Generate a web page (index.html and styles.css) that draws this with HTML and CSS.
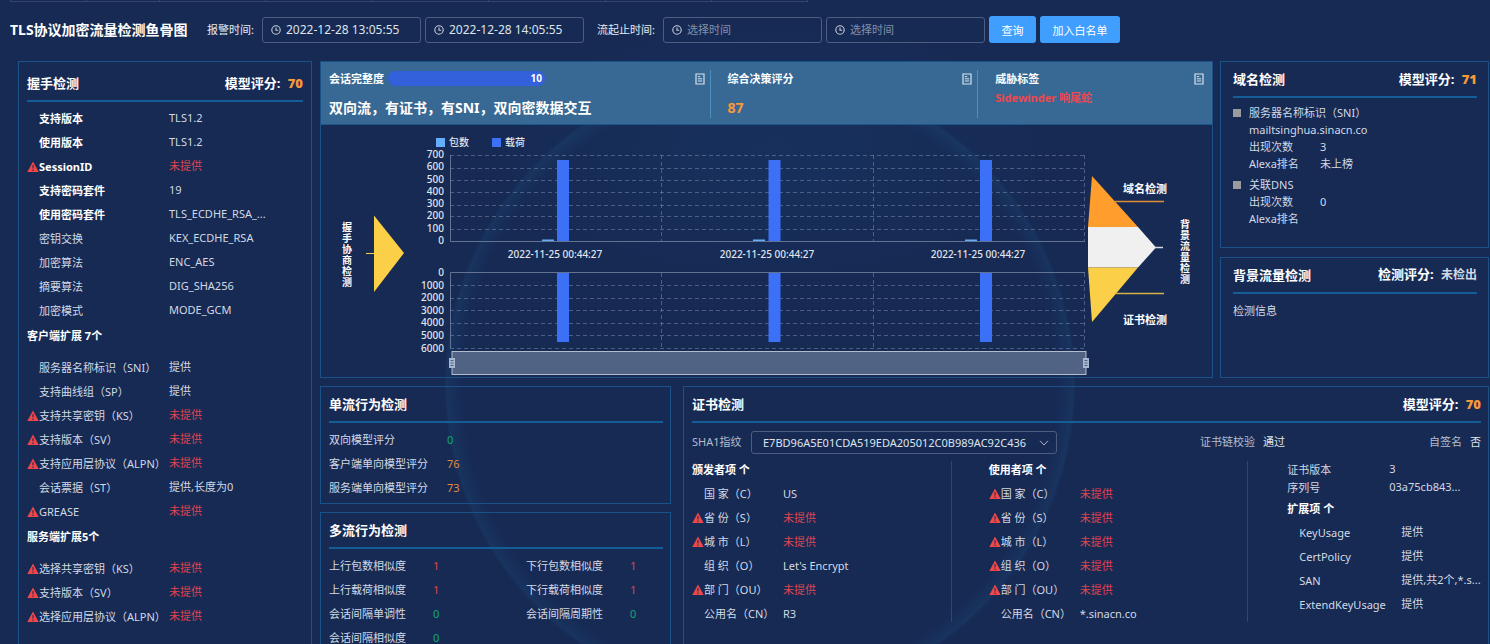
FILE: index.html
```html
<!DOCTYPE html>
<html lang="zh-CN">
<head>
<meta charset="utf-8">
<title>TLS协议加密流量检测鱼骨图</title>
<link rel="stylesheet" href="styles.css">
</head>
<body>
<svg class="defs" aria-hidden="true">
  <symbol id="warn" viewBox="0 0 12 12"><path d="M6 .6 11.7 11H.3z" fill="#f04848"/><path d="M5.3 4h1.4v3.6H5.3zM5.3 8.5h1.4v1.4H5.3z" fill="#5a2c50"/></symbol>
  <symbol id="clock" viewBox="0 0 12 12"><circle cx="6" cy="6" r="4.2" fill="none" stroke="#c9cfdb" stroke-width="1.1"/><path d="M6 3.4V6.3H8.2" fill="none" stroke="#c9cfdb" stroke-width="1.1"/></symbol>
  <symbol id="doc" viewBox="0 0 10 12"><path d="M1 1h8v10H1z" fill="none" stroke="#d5e2ee" stroke-width="1.2"/><path d="M2.8 3.6h2.4M2.8 5.8h4.4M2.8 8h4.4" stroke="#d5e2ee" stroke-width="1"/></symbol>
</svg>
<div class="app">
  <div class="tabs"><i></i><i></i><i></i><i></i><i></i><i></i><i></i><i></i></div>

  <header class="toolbar">
    <h1 class="title">TLS协议加密流量检测鱼骨图</h1>
    <label class="toolbar-label" for="alarm-from">报警时间:</label>
    <span class="time"><svg><use href="#clock"/></svg><input id="alarm-from" type="text" value="2022-12-28 13:05:55"></span>
    <span class="time"><svg><use href="#clock"/></svg><input type="text" aria-label="报警结束时间" value="2022-12-28 14:05:55"></span>
    <label class="toolbar-label flow-label" for="flow-from">流起止时间:</label>
    <span class="time"><svg><use href="#clock"/></svg><input id="flow-from" type="text" placeholder="选择时间"></span>
    <span class="time"><svg><use href="#clock"/></svg><input type="text" aria-label="流终止时间" placeholder="选择时间"></span>
    <button class="btn" type="button">查询</button>
    <button class="btn btn-wide" type="button">加入白名单</button>
  </header>

  <main class="board">
    <section class="panel handshake">
      <div class="panel-head"><h2>握手检测</h2><p>模型评分: <b>70</b></p></div>
      <dl class="rows">
        <div class="strong"><dt>支持版本</dt><dd>TLS1.2</dd></div>
        <div class="strong"><dt>使用版本</dt><dd>TLS1.2</dd></div>
        <div class="strong"><svg><use href="#warn"/></svg><dt>SessionID</dt><dd class="bad">未提供</dd></div>
        <div class="strong"><dt>支持密码套件</dt><dd>19</dd></div>
        <div class="strong"><dt>使用密码套件</dt><dd>TLS_ECDHE_RSA_...</dd></div>
        <div><dt>密钥交换</dt><dd>KEX_ECDHE_RSA</dd></div>
        <div><dt>加密算法</dt><dd>ENC_AES</dd></div>
        <div><dt>摘要算法</dt><dd>DIG_SHA256</dd></div>
        <div><dt>加密模式</dt><dd>MODE_GCM</dd></div>
      </dl>
      <h3>客户端扩展 7个</h3>
      <dl class="rows">
        <div><dt>服务器名称标识（SNI）</dt><dd>提供</dd></div>
        <div><dt>支持曲线组（SP）</dt><dd>提供</dd></div>
        <div><svg><use href="#warn"/></svg><dt>支持共享密钥（KS）</dt><dd class="bad">未提供</dd></div>
        <div><svg><use href="#warn"/></svg><dt>支持版本（SV）</dt><dd class="bad">未提供</dd></div>
        <div><svg><use href="#warn"/></svg><dt>支持应用层协议（ALPN）</dt><dd class="bad">未提供</dd></div>
        <div><dt>会话票据（ST）</dt><dd>提供,长度为0</dd></div>
        <div><svg><use href="#warn"/></svg><dt>GREASE</dt><dd class="bad">未提供</dd></div>
      </dl>
      <h3>服务端扩展5个</h3>
      <dl class="rows">
        <div><svg><use href="#warn"/></svg><dt>选择共享密钥（KS）</dt><dd class="bad">未提供</dd></div>
        <div><svg><use href="#warn"/></svg><dt>支持版本（SV）</dt><dd class="bad">未提供</dd></div>
        <div><svg><use href="#warn"/></svg><dt>选择应用层协议（ALPN）</dt><dd class="bad">未提供</dd></div>
      </dl>
    </section>

    <div class="right">
      <div class="upper">
        <section class="panel overview">
          <div class="band">
            <div class="cell">
              <div class="cell-top"><span>会话完整度</span><span class="bar">10</span><svg class="doc"><use href="#doc"/></svg></div>
              <p class="summary">双向流，有证书，有SNI，双向密数据交互</p>
            </div>
            <div class="cell">
              <div class="cell-top"><span>综合决策评分</span><svg class="doc"><use href="#doc"/></svg></div>
              <p class="summary score">87</p>
            </div>
            <div class="cell">
              <div class="cell-top"><span>威胁标签</span><svg class="doc"><use href="#doc"/></svg></div>
              <p class="threat">Sidewinder 响尾蛇</p>
            </div>
          </div>
          <svg class="chart" viewBox="321 125 891 252" role="img" aria-label="包数与载荷">
            <rect x="436" y="138" width="9" height="9" fill="#63aefb"/><text x="449" y="146">包数</text>
            <rect x="492" y="138" width="9" height="9" fill="#3c70f6"/><text x="505" y="146">载荷</text>
            <g class="grid">
              <path d="M450 155.500H1085M450 168.500H1085M450 180.500H1085M450 192.500H1085M450 205.500H1085M450 216.500H1085M450 229.500H1085M450 285.500H1085M450 298.500H1085M450 310.500H1085M450 323.500H1085M450 335.500H1085M450 348.500H1085"/>
              <path d="M661.500 155V241M873.500 155V241M1084.500 155V241M661.500 273V348M873.500 273V348M1084.500 273V348"/>
            </g>
            <path class="axis" d="M450.500 155V241.500H1085M450.500 348V272.500H1085"/>
            <g class="ticks">
              <text x="444" y="158">700</text><text x="444" y="170">600</text><text x="444" y="183">500</text><text x="444" y="195">400</text><text x="444" y="207">300</text><text x="444" y="219">200</text><text x="444" y="232">100</text><text x="444" y="244">0</text>
              <text x="444" y="276">0</text><text x="444" y="289">1000</text><text x="444" y="301">2000</text><text x="444" y="314">3000</text><text x="444" y="326">4000</text><text x="444" y="339">5000</text><text x="444" y="352">6000</text>
            </g>
            <g fill="#3c70f6">
              <path d="M557 160h12v81h-12zM768.500 160h12v81h-12zM980 160h12v81h-12zM557 273h12v69h-12zM768.500 273h12v69h-12zM980 273h12v69h-12z"/>
              <path d="M542 239.500h12v1.500h-12zM753 239.500h12v1.500h-12zM965 239.500h12v1.500h-12z" fill="#63aefb"/>
            </g>
            <g class="dates"><text x="555" y="258">2022-11-25 00:44:27</text><text x="767" y="258">2022-11-25 00:44:27</text><text x="978" y="258">2022-11-25 00:44:27</text></g>
            <rect x="452" y="351.500" width="634" height="23" fill="#506384" stroke="#b4bccb"/>
            <g fill="#a7b7cf"><rect x="449" y="358" width="6" height="10"/><rect x="1083" y="358" width="6" height="10"/></g>
            <path d="M450.500 360.500h3M450.500 363h3M450.500 365.500h3M1084.500 360.500h3M1084.500 363h3M1084.500 365.500h3" stroke="#506384"/>
            <path d="M374 215.500 404 253 374 292z" fill="#fccf48"/><path d="M366 253.500h9" stroke="#fccf48"/>
            <path d="M1092 176 1138 227h-50z" fill="#ff9e2c"/><path d="M1088 227h50l18 20.500-18 20h-50z" fill="#f0f0f0"/><path d="M1088 267.500h50L1092 322z" fill="#fccf48"/>
            <path d="M1115 201.500h49" stroke="#e08e34" stroke-width="1.500"/><path d="M1155 247.500h8" stroke="#d4d8e2" stroke-width="1.500"/><path d="M1115 293.500h49" stroke="#d2b344" stroke-width="1.500"/>
            <g class="bone"><text x="1145" y="193">域名检测</text><text x="1145" y="324">证书检测</text></g>
            <g class="bone spine"><text x="347" y="231">握</text><text x="347" y="242">手</text><text x="347" y="253">协</text><text x="347" y="264">商</text><text x="347" y="275">检</text><text x="347" y="286">测</text>
              <text x="1185" y="228">背</text><text x="1185" y="239">景</text><text x="1185" y="250">流</text><text x="1185" y="261">量</text><text x="1185" y="272">检</text><text x="1185" y="283">测</text></g>
          </svg>
        </section>

        <div class="side">
          <section class="panel domain">
            <div class="panel-head"><h2>域名检测</h2><p>模型评分: <b>71</b></p></div>
            <ul class="domains">
              <li><p>服务器名称标识（SNI）</p><p>mailtsinghua.sinacn.co</p><p><span>出现次数</span>3</p><p><span>Alexa排名</span>未上榜</p></li>
              <li><p>关联DNS</p><p><span>出现次数</span>0</p><p><span>Alexa排名</span></p></li>
            </ul>
          </section>
          <section class="panel background">
            <div class="panel-head"><h2>背景流量检测</h2><p>检测评分: <span class="none">未检出</span></p></div>
            <p class="info">检测信息</p>
          </section>
        </div>
      </div>

      <div class="lower">
        <div class="flows">
          <section class="panel flow">
            <div class="panel-head"><h2>单流行为检测</h2></div>
            <dl class="rows single">
              <div><dt>双向模型评分</dt><dd class="good">0</dd></div>
              <div><dt>客户端单向模型评分</dt><dd class="mid">76</dd></div>
              <div><dt>服务端单向模型评分</dt><dd class="mid">73</dd></div>
            </dl>
          </section>
          <section class="panel flow multi-flow">
            <div class="panel-head"><h2>多流行为检测</h2></div>
            <dl class="rows multi">
              <div><dt>上行包数相似度</dt><dd class="bad">1</dd></div>
              <div><dt>下行包数相似度</dt><dd class="bad">1</dd></div>
              <div><dt>上行载荷相似度</dt><dd class="bad">1</dd></div>
              <div><dt>下行载荷相似度</dt><dd class="bad">1</dd></div>
              <div><dt>会话间隔单调性</dt><dd class="good">0</dd></div>
              <div><dt>会话间隔周期性</dt><dd class="good">0</dd></div>
              <div><dt>会话间隔相似度</dt><dd class="good">0</dd></div>
            </dl>
          </section>
        </div>

        <section class="panel flow cert">
          <div class="panel-head"><h2>证书检测</h2><p>模型评分: <b>70</b></p></div>
          <div class="cert-bar">
            <label for="sha1">SHA1指纹</label>
            <span class="picker"><select id="sha1"><option>E7BD96A5E01CDA519EDA205012C0B989AC92C436</option></select><svg viewBox="0 0 10 6"><path d="M1 .8 5 5 9 .8" fill="none" stroke="#a9b3c6"/></svg></span>
            <p class="chain">证书链校验<em>通过</em></p>
            <p class="self">自签名<em>否</em></p>
          </div>
          <div class="cert-cols">
            <div class="cert-col">
              <h3>颁发者项 个</h3>
              <dl class="rows">
                <div><dt>国 家（C）</dt><dd>US</dd></div>
                <div><svg><use href="#warn"/></svg><dt>省 份（S）</dt><dd class="bad">未提供</dd></div>
                <div><svg><use href="#warn"/></svg><dt>城 市（L）</dt><dd class="bad">未提供</dd></div>
                <div><dt>组 织（O）</dt><dd>Let's Encrypt</dd></div>
                <div><svg><use href="#warn"/></svg><dt>部 门（OU）</dt><dd class="bad">未提供</dd></div>
                <div><dt>公用名（CN）</dt><dd>R3</dd></div>
              </dl>
            </div>
            <div class="cert-col">
              <h3>使用者项 个</h3>
              <dl class="rows">
                <div><svg><use href="#warn"/></svg><dt>国 家（C）</dt><dd class="bad">未提供</dd></div>
                <div><svg><use href="#warn"/></svg><dt>省 份（S）</dt><dd class="bad">未提供</dd></div>
                <div><svg><use href="#warn"/></svg><dt>城 市（L）</dt><dd class="bad">未提供</dd></div>
                <div><svg><use href="#warn"/></svg><dt>组 织（O）</dt><dd class="bad">未提供</dd></div>
                <div><svg><use href="#warn"/></svg><dt>部 门（OU）</dt><dd class="bad">未提供</dd></div>
                <div><dt>公用名（CN）</dt><dd>*.sinacn.co</dd></div>
              </dl>
            </div>
            <div class="cert-col extra">
              <dl class="rows meta">
                <div><dt>证书版本</dt><dd>3</dd></div>
                <div><dt>序列号</dt><dd>03a75cb843...</dd></div>
              </dl>
              <h3>扩展项 个</h3>
              <dl class="rows ext">
                <div><dt>KeyUsage</dt><dd>提供</dd></div>
                <div><dt>CertPolicy</dt><dd>提供</dd></div>
                <div><dt>SAN</dt><dd>提供,共2个,*.s...</dd></div>
                <div><dt>ExtendKeyUsage</dt><dd>提供</dd></div>
              </dl>
            </div>
          </div>
        </section>
      </div>
    </div>
  </main>
</div>
</body>
</html>
```
FILE: styles.css
```css
* { box-sizing: border-box; margin: 0; padding: 0; }
body, input, select, button {
  font-family: "Noto Sans", "Noto Sans CJK SC", sans-serif;
  font-size: 11px;
}
body { color: #d3d9e4; background: #162a54; line-height: 16px; }
.defs { display: none; }
ul { list-style: none; }

.app {
  height: 100vh;
  overflow: hidden;
  background:
    radial-gradient(circle 316px at 51% 385px, transparent 94%, rgba(40, 140, 190, .1) 99%, transparent 100%),
    radial-gradient(ellipse 280px 130px at 52% 150px, rgba(30, 100, 150, .12), transparent),
    #162a54;
}

.tabs { display: flex; height: 3px; margin-left: 10px; }
.tabs i { width: 106px; height: 2px; border: solid #34466f; border-width: 0 1px 1px 0; }
.tabs i:nth-child(1) { width: 77px; border-left-width: 1px; }
.tabs i:nth-child(2) { width: 73px; }
.tabs i:nth-child(5), .tabs i:nth-child(6) { width: 117px; }
.tabs i:nth-child(8) { width: 96px; }

.toolbar { display: flex; align-items: center; gap: 4px; padding: 13px 10px 18px; }
.title { width: 193px; font-size: 14px; line-height: 20px; color: #fff; white-space: nowrap; }
.toolbar-label { width: 51px; color: #e6eaf1; white-space: nowrap; }
.flow-label { width: 62px; margin-left: 9px; }
.time {
  display: flex; align-items: center; gap: 4px;
  width: 159px; height: 26px; padding: 0 7px;
  border: 1px solid #4c5d80; border-radius: 3px;
}
.time svg { flex: none; width: 12px; height: 12px; }
.time input { flex: 1; min-width: 0; border: 0; outline: 0; background: none; color: #dfe4ec; font-size: 12px; }
.time input::placeholder { color: #8290ab; font-size: 11px; opacity: 1; }
.btn { width: 47px; height: 27px; border: 0; border-radius: 3px; background: #409eff; color: #fff; }
.btn-wide { width: 80px; }

.board {
  display: grid; grid-template-columns: 294fr 1169fr; gap: 8px;
  padding: 0 1px 0 18px;
}
.panel { min-width: 0; border: 1px solid #1a5288; }
.panel-head {
  display: flex; justify-content: space-between; align-items: center;
  height: 36px; border-bottom: 2px solid #155d96; color: #fff;
}
.panel-head h2, .panel-head p { font-size: 13px; line-height: 20px; font-weight: 700; }
.panel-head b { margin-left: 4px; color: #f7983a; }
.none { margin-left: 4px; font-size: 12px; color: #d3d9e4; }

.handshake { padding: 4px 8px 60px; }
.handshake .panel-head { margin-bottom: 5px; }
h3 { font-size: 11px; line-height: 24px; color: #fff; }
.handshake h3 { margin: 1px 0 8px; }
.rows > div { display: grid; grid-template-columns: 12px 130px 1fr; align-items: center; height: 24px; white-space: nowrap; }
.rows svg { grid-column: 1; width: 12px; height: 12px; }
.rows dt { grid-column: 2; }
.rows dd { grid-column: 3; line-height: 16px; }
.handshake dd { padding-bottom: 3px; }
.strong dt { font-weight: 700; color: #fff; }
.rows .bad { color: #e04350; }
.good { color: #12a873; }
.mid { color: #e08a3c; }

.right { display: flex; flex-direction: column; gap: 8px; min-width: 0; }
.upper { display: grid; grid-template-columns: 893fr 269fr; gap: 7px; }
.band {
  display: grid; grid-template-columns: 390fr 268fr 234fr;
  height: 63px; padding: 8px 0;
  background: #386994; border-bottom: 1px solid #1f568a; color: #fff; font-weight: 700;
}
.cell { padding: 0 5px 0 17px; border-right: 1px solid #4a92c0; min-width: 0; }
.cell:first-child { padding-left: 8px; }
.cell:last-child { border: 0; padding-right: 8px; }
.cell-top { display: flex; align-items: center; gap: 4px; height: 17px; }
.bar { width: 157px; height: 15px; padding-right: 3px; border-radius: 8px; background: #3261db; font-size: 10px; line-height: 15px; text-align: right; }
.doc { width: 10px; height: 12px; margin-left: auto; }
.summary { margin-top: 11px; font-size: 14px; line-height: 20px; white-space: nowrap; }
.score { color: #f7983a; }
.threat { margin-top: 3px; color: #ee474c; }

.chart { display: block; width: 100%; font-size: 10px; font-weight: 500; fill: #e0e5ed; }
.grid { stroke: #8492ad; stroke-opacity: .5; stroke-dasharray: 4 3; fill: none; }
.axis { stroke: #7585a3; stroke-opacity: .8; fill: none; }
.ticks { text-anchor: end; }
.dates { text-anchor: middle; }
.bone { text-anchor: middle; font-size: 11px; font-weight: 700; fill: #fff; }
.spine { font-size: 10px; }

.side { display: flex; flex-direction: column; gap: 9px; min-width: 0; }
.side .panel { padding: 0 11px 0 12px; }
.domain { flex: 188; }
.background { flex: 121; }
.domains { padding-top: 6px; }
.domains li { position: relative; padding-left: 16px; margin-bottom: 4px; line-height: 17px; }
.domains li::before { content: ""; position: absolute; left: 0; top: 5px; width: 8px; height: 8px; background: #999b9f; }
.domains span { display: inline-block; width: 71px; }
.info { padding-top: 9px; }

.lower { display: grid; grid-template-columns: 351fr 806fr; gap: 12px; }
.flows { display: flex; flex-direction: column; gap: 8px; min-width: 0; }
.flow { padding: 0 7px 3px 8px; }
.rows.single, .rows.multi { padding-top: 5px; }
.single > div { grid-template-columns: 0 118px 1fr; }
.multi { display: grid; grid-template-columns: 197px 1fr; }
.multi > div { grid-template-columns: 0 104px 1fr; }
.multi-flow { flex: 1; }

.cert { padding-bottom: 40px; }
.cert-bar { display: flex; align-items: center; height: 38px; color: #b5bdcc; }
.cert-bar label { width: 59px; white-space: nowrap; }
.picker { position: relative; width: 306px; height: 23px; }
.picker select {
  width: 100%; height: 100%; padding: 0 23px 0 11px; overflow: hidden;
  appearance: none; border: 1px solid #4c5d80; border-radius: 3px; background: none; color: #dfe4ec;
}
.picker svg { position: absolute; right: 8px; top: 9px; width: 10px; height: 6px; }
.cert-bar em { margin-left: 8px; font-style: normal; color: #e0e5ed; }
.chain { margin-left: 143px; }
.self { margin-left: auto; }
.cert-cols { display: grid; grid-template-columns: 260fr 297fr 233fr; }
.cert-col { border-right: 1px solid #33466e; min-width: 0; height: 161px; }
.cert-col + .cert-col { padding-left: 37px; }
.cert-col:last-child { border: 0; }
.cert-col h3 { line-height: 17px; margin-bottom: 4px; }
.cert-col .rows > div { grid-template-columns: 12px 79px 1fr; }
.cert-cols .extra { padding-left: 39px; }
.extra .rows.meta > div { grid-template-columns: 0 102px 1fr; height: 18px; }
.extra h3 { margin: 3px 0; line-height: 18px; }
.extra .rows.ext > div { grid-template-columns: 12px 102px 1fr; }
.extra dd { padding-bottom: 2px; }
```
